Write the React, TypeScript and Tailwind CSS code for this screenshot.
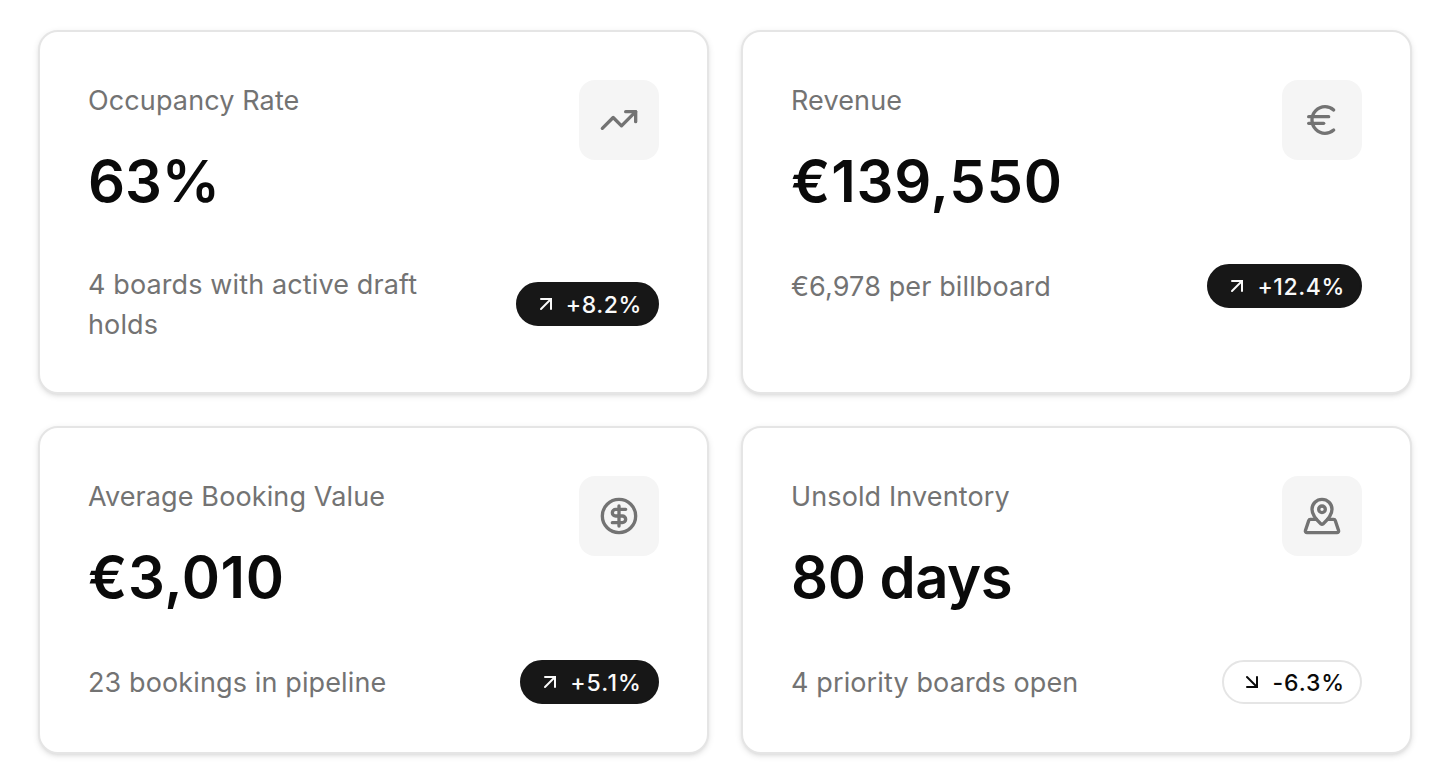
import { ArrowDownRight, ArrowUpRight, CircleDollarSign, Euro, MapPinned, TrendingUp } from "lucide-react";
import type { LucideIcon } from "lucide-react";
import clsx from "clsx";

type Stat = {
  title: string;
  value: string;
  valueClass: string;
  note: string;
  change: string;
  changeClass: string;
  down?: boolean;
  icon: LucideIcon;
};

const stats: Stat[] = [
  {
    title: "Occupancy Rate",
    value: "63%",
    valueClass: "tracking-[-0.1px]",
    note: "4 boards with active draft holds",
    change: "+8.2%",
    changeClass: "tracking-[0.6px]",
    icon: TrendingUp,
  },
  {
    title: "Revenue",
    value: "€139,550",
    valueClass: "tracking-[0.8px]",
    note: "€6,978 per billboard",
    change: "+12.4%",
    changeClass: "tracking-[0.6px]",
    icon: Euro,
  },
  {
    title: "Average Booking Value",
    value: "€3,010",
    valueClass: "tracking-[0.6px]",
    note: "23 bookings in pipeline",
    change: "+5.1%",
    changeClass: "tracking-[1.1px]",
    icon: CircleDollarSign,
  },
  {
    title: "Unsold Inventory",
    value: "80 days",
    valueClass: "tracking-[-0.5px]",
    note: "4 priority boards open",
    change: "-6.3%",
    changeClass: "tracking-[0.9px]",
    down: true,
    icon: MapPinned,
  },
];

function StatCard({ stat }: { stat: Stat }) {
  const Icon = stat.icon;
  const Arrow = stat.down ? ArrowDownRight : ArrowUpRight;

  return (
    <div className="rounded-[20px] border-2 border-[#e5e5e5] bg-white p-12 shadow-[0_2px_6px_rgba(0,0,0,0.1),0_2px_4px_-2px_rgba(0,0,0,0.1)]">
      <div className="flex h-[136px] items-start justify-between">
        <div>
          <p className="pt-px text-[27px] leading-10 tracking-[0.12px] text-[#737373]">{stat.title}</p>
          <p className={clsx("mt-6 text-[58px] leading-[72px] font-semibold text-[#0a0a0a]", stat.valueClass)}>
            {stat.value}
          </p>
        </div>
        <div className="flex size-20 items-center justify-center rounded-2xl bg-[#f5f5f5] text-[#737373]">
          <Icon size={40} />
        </div>
      </div>
      <div className="mt-12 flex items-center justify-between gap-6">
        <p className="-mb-px pt-px text-[27px] leading-10 tracking-[0.12px] text-[#737373]">{stat.note}</p>
        <span
          className={clsx(
            "flex h-11 shrink-0 items-center gap-2 rounded-full border-2 px-4 text-[23px] font-medium",
            stat.down ? "border-[#e5e5e5] text-[#0a0a0a]" : "border-[#171717] bg-[#171717] text-[#fafafa]",
          )}
        >
          <Arrow size={24} strokeLinejoin="miter" />
          <span className={clsx("-mr-px pt-0.5", stat.changeClass)}>{stat.change}</span>
        </span>
      </div>
    </div>
  );
}

export default function App() {
  return (
    <main className="grid h-[776px] grid-cols-2 grid-rows-[364px_328px] gap-8 bg-white pt-[30px] pr-11 pl-[38px] font-['Inter',sans-serif]">
      {stats.map((stat) => (
        <StatCard key={stat.title} stat={stat} />
      ))}
    </main>
  );
}
